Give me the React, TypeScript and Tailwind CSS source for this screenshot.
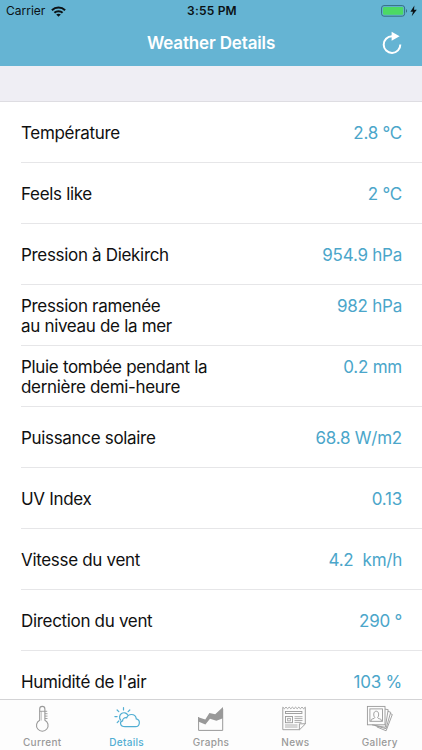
import type { ReactNode } from "react"

type Row = { label: string; value: string }

const rows: Row[] = [
  { label: "Température", value: "2.8 °C" },
  { label: "Feels like", value: "2 °C" },
  { label: "Pression à Diekirch", value: "954.9 hPa" },
  { label: "Pression ramenée\nau niveau de la mer", value: "982 hPa" },
  { label: "Pluie tombée pendant la\ndernière demi-heure", value: "0.2 mm" },
  { label: "Puissance solaire", value: "68.8 W/m2" },
  { label: "UV Index", value: "0.13" },
  { label: "Vitesse du vent", value: "4.2  km/h" },
  { label: "Direction du vent", value: "290 °" },
  { label: "Humidité de l'air", value: "103 %" },
]

function Wifi() {
  return (
    <svg width="15" height="11" viewBox="0 0 15 11" fill="none" stroke="#0b1215" strokeWidth="2">
      <path d="M0.9 4.2C4.6 0.6 10.4 0.6 14.1 4.2" />
      <path d="M3.4 6.8C5.7 4.6 9.3 4.6 11.6 6.8" />
      <path d="M7.5 10.8L5.2 8.6C6.5 7.3 8.5 7.3 9.8 8.6Z" fill="#0b1215" stroke="none" />
    </svg>
  )
}

function Battery() {
  return (
    <svg width="37" height="12" viewBox="0 0 37 12">
      <rect x="0.6" y="0.6" width="23" height="10.6" rx="2.4" fill="none" stroke="#356f83" />
      <rect x="2" y="2" width="20.2" height="7.8" rx="1.2" fill="#4cd964" />
      <path d="M25 4v3.8c1.4-.5 1.4-3.3 0-3.8z" fill="#356f83" />
      <path d="M33.4 0.4L29.4 6.7H32L30.7 11.2L35.8 4.7H33Z" fill="#0b1215" />
    </svg>
  )
}

function Refresh() {
  return (
    <svg className="-mt-[2px]" width="20" height="24" viewBox="0 0 20 24" fill="none">
      <path d="M10.6 5.3H10A8.3 8.3 0 1 0 18.3 13.4" stroke="white" strokeWidth="2" />
      <path d="M9.6 0.8L17.6 5.2L9.6 9.8Z" fill="white" />
    </svg>
  )
}

function Thermometer() {
  return (
    <svg width="28" height="28" viewBox="0 0 28 28" fill="none" stroke="currentColor" strokeWidth="1.1">
      <path d="M11.7 15.2V4a2.6 2.6 0 0 1 5.2 0v11.2a5.8 5.8 0 1 1-5.2 0z" />
      <path d="M13.4 15.5V6.3" strokeWidth=".5" />
      <path d="M11.7 6.3h7.5M17 8.7h2.5M17 11.1h2.5M17 13.5h2.5" strokeWidth=".9" />
    </svg>
  )
}

function Forecast() {
  return (
    <svg width="28" height="28" viewBox="0 0 28 28" fill="none" stroke="currentColor" strokeWidth="1.2" strokeLinecap="round">
      <path d="M12.1 21.6h10.2a3.9 3.9 0 0 0 1-7.7c-.3-2.7-2.4-4.4-4.9-4.4-2.2 0-4 1.3-4.7 3.3-2.4-.5-4.1 1-4.1 3-1.7.4-2.3 1.6-2 3 .3 1.6 1.6 2.8 4.5 2.8z" />
      <path d="M7.6 15A4.4 4.4 0 1 1 14.8 10" />
      <path d="M10.5 5V2.5M5.8 6.7L4.1 5M15.1 6.7l1.7-1.7M4.1 11.6H1.9M5.8 16l-1.6 1.6" />
    </svg>
  )
}

function Graph() {
  return (
    <svg width="28" height="28" viewBox="0 0 28 28">
      <path d="M1.2 12.2L8.3 14.4L12.4 8L18.2 9.2L26 2V13.2L19.4 15.8L13 13.8L8.4 19.4L1.2 16.4Z" fill="currentColor" />
      <path d="M1.6 12v13.4h24.1V4" fill="none" stroke="currentColor" />
    </svg>
  )
}

function Newspaper() {
  return (
    <svg width="28" height="28" viewBox="0 0 28 28" fill="none" stroke="currentColor">
      <path d="M1.8 2.2l1.6 1.5L5 2.2l1.6 1.5L8.2 2.2l1.6 1.5L11.4 2.2l1.6 1.5L14.6 2.2l1.6 1.5L17.8 2.2l1.6 1.5L21 2.2l1.6 1.5L24.3 2.2v16.8l-5.7 5.7H1.8z" strokeWidth=".9" />
      <path d="M24.3 18.8h-5.9v5.9" strokeWidth=".9" />
      <rect x="4.5" y="6.5" width="16.4" height="2" strokeWidth=".9" />
      <rect x="4.5" y="11.5" width="7" height="6.2" strokeWidth=".9" />
      <rect x="6.7" y="13.3" width="2.6" height="2.6" strokeWidth=".8" />
      <path d="M13.5 11.7h8M13.5 13.6h8M13.5 15.5h8M13.5 17.4h7M4 20h12.5M4 22h12.5" strokeWidth=".8" />
    </svg>
  )
}

function Photos() {
  return (
    <svg width="28" height="28" viewBox="0 0 28 28" fill="none" stroke="currentColor" strokeWidth=".9">
      <rect x="1.4" y="1.4" width="17.6" height="18.4" />
      <rect x="3.9" y="3.9" width="12.6" height="12.4" />
      <path d="M5.1 16.2v-1.3c0-1.2 3.7-1.1 3.7-2.3-1.4-1.3-1.8-6.4 1.4-6.4s2.8 5.1 1.4 6.4c0 1.2 3.7 1.1 3.7 2.3v1.3" />
      <path d="M19 4.1l3.2.6-2.9 17.6-13.2-2.4M22.1 6.4l2.6.9-4.7 16.4-11.3-3.2M24.4 8.6l1.9.9-6.2 16.3-9.3-3.9" />
    </svg>
  )
}

function Tab({ label, icon, active }: { label: string; icon: ReactNode; active?: boolean }) {
  return (
    <button className={`flex flex-1 flex-col items-center pt-[5px] ${active ? "text-[#51aed3]" : "text-[#999999]"}`}>
      {icon}
      <span className="mt-[2px] text-[10px] leading-[14px] font-medium tracking-[0.3px]">{label}</span>
    </button>
  )
}

export default function App() {
  return (
    <div className="flex h-[750px] w-[422px] flex-col overflow-hidden bg-white font-['Inter',sans-serif]">
      {/* Header with status bar */}
      <header className="h-[66px] shrink-0 bg-[#65b4d3]">
        <div className="grid h-[22px] grid-cols-3 items-center pr-[4px] pl-[6px] text-[#0b1215]">
          <div className="flex items-center gap-[6px]">
            <span className="text-[12px] tracking-[0px]">Carrier</span>
            <Wifi />
          </div>
          <span className="text-center text-[12px] font-semibold tracking-[0.2px]">3:55 PM</span>
          <div className="flex justify-end">
            <Battery />
          </div>
        </div>
        <div className="grid h-[44px] grid-cols-[40px_1fr_40px] items-center">
          <h1 className="col-start-2 text-center text-[17px] font-semibold tracking-[-0.15px] text-white">Weather Details</h1>
          <button aria-label="Refresh">
            <Refresh />
          </button>
        </div>
      </header>

      <div className="h-[36px] shrink-0 border-b border-[#dedde2] bg-[#efeef4]" />

      {/* Measurements */}
      <main className="h-[597px] shrink-0 overflow-hidden pl-[21px]">
        {rows.map((row) => (
          <div
            key={row.label}
            className="flex h-[61px] items-center justify-between border-b border-[#e6e6e8] pt-[2px] pr-[20px] text-[17px] leading-[20px]"
          >
            <span className="whitespace-pre tracking-[-0.32px] text-[#101010]">{row.label}</span>
            <span className={`whitespace-pre tracking-[-0.24px] text-[#4ba6ca] ${row.label.includes("\n") ? "mb-[20px]" : ""}`}>
              {row.value}
            </span>
          </div>
        ))}
      </main>

      {/* Tab bar */}
      <nav className="flex h-[51px] shrink-0 border-t border-[#d3d3d5] bg-[#fdfdfd]">
        <Tab label="Current" icon={<Thermometer />} />
        <Tab label="Details" icon={<Forecast />} active />
        <Tab label="Graphs" icon={<Graph />} />
        <Tab label="News" icon={<Newspaper />} />
        <Tab label="Gallery" icon={<Photos />} />
      </nav>
    </div>
  )
}
